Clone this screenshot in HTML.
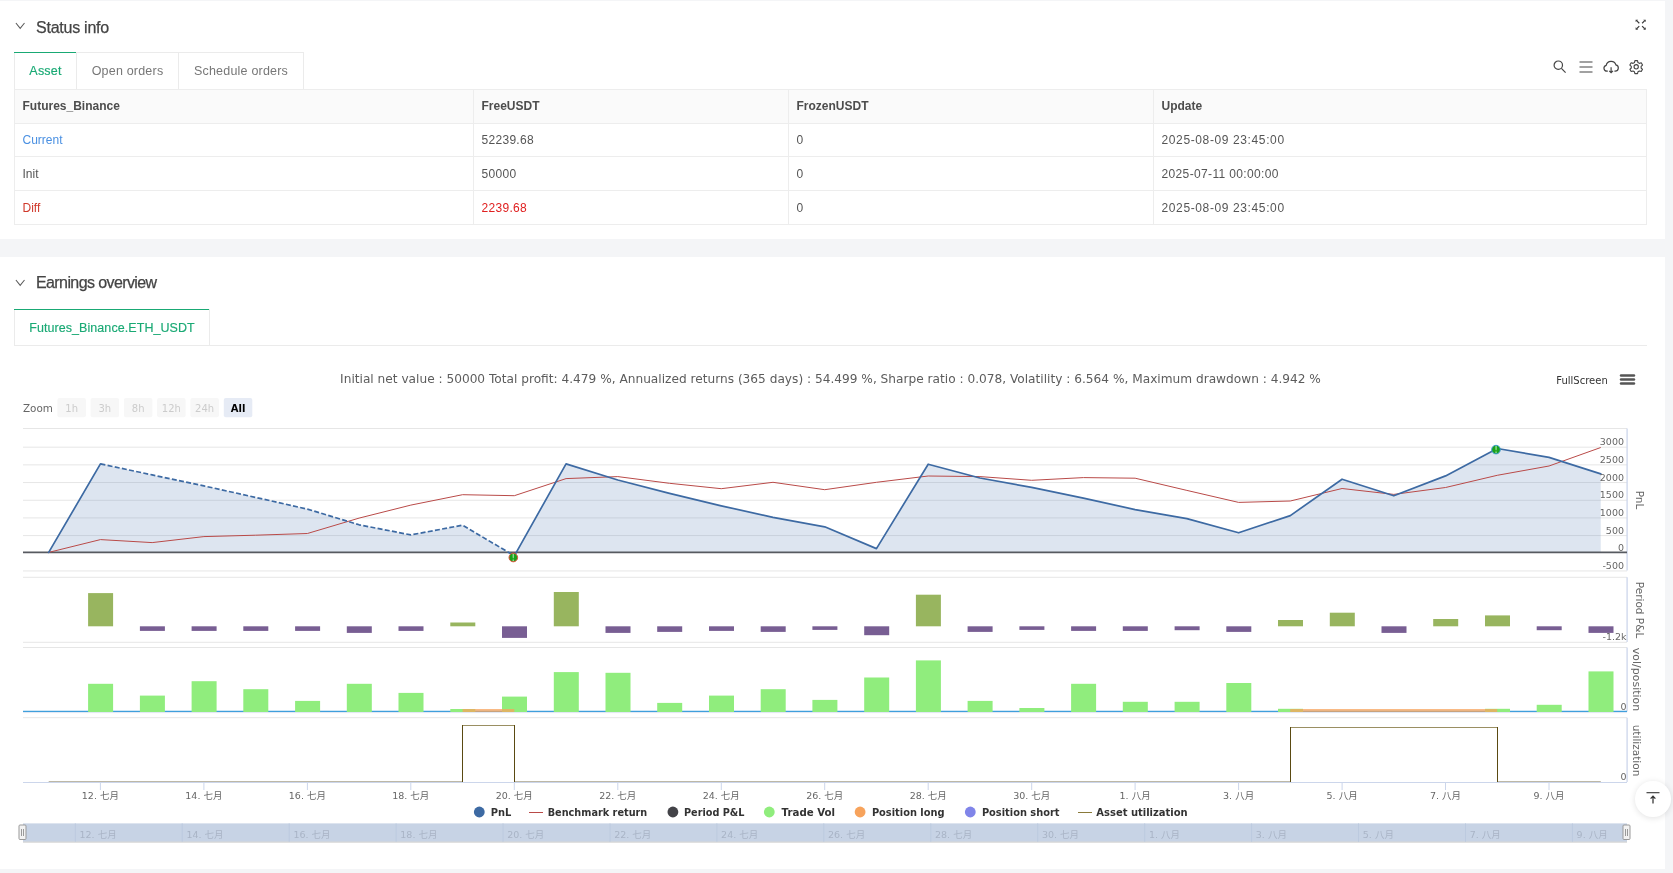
<!DOCTYPE html>
<html><head><meta charset="utf-8"><title>Backtest</title>
<style>
html,body{margin:0;padding:0;}
body{width:1673px;height:873px;overflow:hidden;background:#f4f5f7;position:relative;font-family:"Liberation Sans","Noto Sans CJK SC",sans-serif;color:#4a4a4a;}
.card{position:absolute;left:0;width:1665px;transform:translateZ(0);}
.bg{position:absolute;left:0;width:1665px;background:#fff;}
#c1{top:1px;height:238px;}
#c2{top:257px;height:612px;}
.hd{position:absolute;left:36px;font-size:16px;letter-spacing:-.24px;color:#444;white-space:nowrap;-webkit-text-stroke:0.25px #444;}
.chev{position:absolute;left:14px;}
.tabs{position:absolute;left:14px;display:flex;height:36px;border:1px solid #ebebeb;border-bottom:none;box-sizing:content-box;}
.tab{height:36px;line-height:36px;font-size:12.5px;color:#777;letter-spacing:.2px;border-right:1px solid #ebebeb;box-sizing:border-box;text-align:center;white-space:nowrap;position:relative;}
.tab:last-child{border-right:none;}
.tab.on{color:#19a974;-webkit-text-stroke:.15px #19a974;}
.tab.on:before{content:"";position:absolute;left:-1px;right:0;top:-1px;height:1px;background:#19a974;}
table{position:absolute;left:14px;top:88px;width:1633px;border-collapse:collapse;table-layout:fixed;font-size:12px;}
td,th{border:1px solid #ededed;height:34px;padding:0 0 0 7.5px;text-align:left;box-sizing:border-box;white-space:nowrap;color:#555;font-weight:normal;}
th{background:#fafafa;font-weight:bold;color:#4d4d4d;height:34px;padding-bottom:1px;}
tr.r1 td{height:33px;}
td.n{letter-spacing:.3px;} td.d{letter-spacing:.62px;}
.blue{color:#4a90e2;} .red{color:#e02020;} .red2{color:#d0392b;}
svg text{font-family:"DejaVu Sans","Noto Sans CJK SC",sans-serif;}
.ax{font-size:9.5px;fill:#666;}
.at{font-size:10.5px;fill:#666;}
.lg{font-size:10.5px;font-weight:bold;fill:#333;}
.nv{font-size:9.5px;fill:#a9b4c6;}
.tt{font-size:12.17px;fill:#5c5c5c;}
.zm{font-size:10.4px;fill:#666;}
.zb{font-size:10px;fill:#ccc;}
.zb.on{fill:#000;font-weight:bold;}
.fs{font-size:10px;fill:#333;}
#top{position:absolute;left:1635px;top:781px;width:35.5px;height:35.5px;border-radius:50%;background:#fff;box-shadow:0 1px 6px rgba(0,0,0,.12);}
</style></head><body>
<div class="bg" style="top:1px;height:238px"></div><div class="bg" style="top:257px;height:612px"></div>
<div class="card" id="c1">
 <svg class="chev" style="top:20px" width="12" height="10" viewBox="0 0 12 10"><path d="M1.9 2 L6.2 7.3 L10.5 2" fill="none" stroke="#5a5a5a" stroke-width="1.05"/></svg>
 <div class="hd" style="top:17.5px">Status info</div>
 <svg style="position:absolute;left:1633.8px;top:17.4px" width="13.4" height="13.4" viewBox="-7 -7 14 14"><g stroke="#3a3a3a" fill="#3a3a3a"><path d="M-1.5 -1.5 L-4.2 -4.2" fill="none" stroke-width="1.25"/><path d="M-5.3 -5.3 L-5.3 -2.7 L-2.7 -5.3z" stroke="none"/><path d="M-1.5 1.5 L-4.2 4.2" fill="none" stroke-width="1.25"/><path d="M-5.3 5.3 L-5.3 2.7 L-2.7 5.3z" stroke="none"/><path d="M1.5 -1.5 L4.2 -4.2" fill="none" stroke-width="1.25"/><path d="M5.3 -5.3 L5.3 -2.7 L2.7 -5.3z" stroke="none"/><path d="M1.5 1.5 L4.2 4.2" fill="none" stroke-width="1.25"/><path d="M5.3 5.3 L5.3 2.7 L2.7 5.3z" stroke="none"/></g></svg>
 <div class="tabs" style="top:51px"><div class="tab on" style="width:62px">Asset</div><div class="tab" style="width:102px">Open orders</div><div class="tab" style="width:124px">Schedule orders</div></div>
 <svg style="position:absolute;left:1550px;top:56px" width="100" height="20" viewBox="0 0 100 20"><g fill="none" stroke="#444" stroke-width="1.2">
  <circle cx="8.3" cy="8.2" r="4.2"/><path d="M11.4 11.4 L15.6 15.6"/>
  <path d="M29.5 5 H42.5 M29.5 10 H42.5 M29.5 15 H42.5"/>
  <path d="M57.8 14.2 H57 A3 3 0 0 1 56.2 8.3 A5 5 0 0 1 65.9 7.9 A3.2 3.2 0 0 1 65 14.2 H64.4 M61.1 10.3 V15.6 M59.2 13.8 L61.1 15.7 L63 13.8"/>
  <g transform="translate(86.2 9.8) scale(.93) translate(-86 -10)"><circle cx="86" cy="10" r="2.3"/>
  <path d="M84.6 3.4 h2.8 l.5 2 1.5 .9 2-.6 1.4 2.4 -1.5 1.4 v1.8 l1.5 1.4 -1.4 2.4 -2-.6 -1.5 .9 -.5 2 h-2.8 l-.5-2 -1.5-.9 -2 .6 -1.4-2.4 1.5-1.4 v-1.8 l-1.5-1.4 1.4-2.4 2 .6 1.5-.9z" stroke-linejoin="round"/></g></g></svg>
 <table><colgroup><col style="width:459px"><col style="width:315px"><col style="width:365px"><col></colgroup>
 <tr><th>Futures_Binance</th><th>FreeUSDT</th><th>FrozenUSDT</th><th>Update</th></tr>
 <tr class="r1"><td class="blue">Current</td><td class="n">52239.68</td><td>0</td><td class="d">2025-08-09 23:45:00</td></tr>
 <tr><td>Init</td><td class="n">50000</td><td>0</td><td class="d" style="letter-spacing:.36px">2025-07-11 00:00:00</td></tr>
 <tr><td class="red2">Diff</td><td class="red n">2239.68</td><td>0</td><td class="d">2025-08-09 23:45:00</td></tr>
 </table>
</div>
<div class="card" id="c2">
 <svg class="chev" style="top:21px" width="12" height="10" viewBox="0 0 12 10"><path d="M1.9 2 L6.2 7.3 L10.5 2" fill="none" stroke="#5a5a5a" stroke-width="1.05"/></svg>
 <div class="hd" style="top:17.4px;letter-spacing:-.6px">Earnings overview</div>
 <div style="position:absolute;left:14px;top:88px;width:1633px;height:1px;background:#ebebeb"></div>
 <div class="tabs" style="top:52px;height:35px"><div class="tab on" style="width:194px;height:35px;font-size:12.5px;letter-spacing:.07px;line-height:36px;-webkit-text-stroke:.15px #19a974">Futures_Binance.ETH_USDT</div></div>
</div>
<svg style="position:absolute;left:0;top:0;transform:translateZ(0)" width="1673" height="873" viewBox="0 0 1673 873">
<line x1="23" x2="1627" y1="428.5" y2="428.5" stroke="#e6e6e6" stroke-width="1"/>
<line x1="23" x2="1627" y1="447.20" y2="447.20" stroke="#e6e6e6" stroke-width="1"/>
<line x1="23" x2="1627" y1="464.88" y2="464.88" stroke="#e6e6e6" stroke-width="1"/>
<line x1="23" x2="1627" y1="482.56" y2="482.56" stroke="#e6e6e6" stroke-width="1"/>
<line x1="23" x2="1627" y1="500.24" y2="500.24" stroke="#e6e6e6" stroke-width="1"/>
<line x1="23" x2="1627" y1="517.92" y2="517.92" stroke="#e6e6e6" stroke-width="1"/>
<line x1="23" x2="1627" y1="535.60" y2="535.60" stroke="#e6e6e6" stroke-width="1"/>
<line x1="23" x2="1627" y1="570.96" y2="570.96" stroke="#e6e6e6" stroke-width="1"/>
<line x1="23" x2="1627" y1="577.3" y2="577.3" stroke="#e6e6e6" stroke-width="1"/>
<line x1="23" x2="1627" y1="642.3" y2="642.3" stroke="#e6e6e6" stroke-width="1"/>
<line x1="23" x2="1627" y1="647.5" y2="647.5" stroke="#e6e6e6" stroke-width="1"/>
<line x1="23" x2="1627" y1="717.7" y2="717.7" stroke="#e6e6e6" stroke-width="1"/>
<line x1="1627.1" x2="1627.1" y1="428.5" y2="570.6" stroke="#ccd6eb" stroke-width="1.3"/>
<line x1="1627.1" x2="1627.1" y1="577.3" y2="641.9" stroke="#ccd6eb" stroke-width="1.3"/>
<line x1="1627.1" x2="1627.1" y1="647.5" y2="711.6" stroke="#ccd6eb" stroke-width="1.3"/>
<line x1="1627.1" x2="1627.1" y1="717.7" y2="782" stroke="#ccd6eb" stroke-width="1.3"/>
<polygon points="48.70,552.40 100.44,463.90 152.17,474.90 203.90,485.90 255.64,497.40 307.38,509.10 359.11,524.80 410.84,534.90 462.58,525.20 514.32,555.80 566.05,463.90 617.79,480.00 669.52,493.40 721.25,505.80 772.99,517.40 824.73,526.80 876.46,548.60 928.20,464.20 979.93,478.00 1031.66,487.40 1083.40,498.10 1135.13,509.60 1186.87,518.60 1238.61,532.80 1290.34,515.60 1342.08,479.20 1393.81,495.80 1445.55,475.90 1497.28,448.50 1549.02,457.40 1600.75,473.90 1600.75,552.6 48.70,552.6" fill="rgba(67,110,170,0.18)"/>
<line x1="23" x2="1627" y1="552.4" y2="552.4" stroke="#575a60" stroke-width="1.8"/>
<polyline points="48.70,552.40 100.44,539.60 152.17,542.60 203.90,536.60 255.64,535.20 307.38,533.50 359.11,518.10 410.84,505.10 462.58,494.70 514.32,495.70 566.05,478.60 617.79,476.60 669.52,483.30 721.25,488.70 772.99,482.30 824.73,489.70 876.46,482.30 928.20,476.00 979.93,476.60 1031.66,480.30 1083.40,477.60 1135.13,478.20 1186.87,490.40 1238.61,502.40 1290.34,501.00 1342.08,488.50 1393.81,494.40 1445.55,487.50 1497.28,475.30 1549.02,466.00 1600.75,447.50" fill="none" stroke="#b94a48" stroke-width="1" stroke-linejoin="round"/>
<polyline points="48.70,552.40 100.44,463.90" fill="none" stroke="#3d6aa3" stroke-width="1.7" stroke-linejoin="round" stroke-linecap="round"/>
<polyline points="100.44,463.90 152.17,474.90 203.90,485.90 255.64,497.40 307.38,509.10 359.11,524.80 410.84,534.90 462.58,525.20 514.32,555.80" fill="none" stroke="#3d6aa3" stroke-width="1.7" stroke-dasharray="5,2.3" stroke-linejoin="round"/>
<polyline points="514.32,555.80 566.05,463.90 617.79,480.00 669.52,493.40 721.25,505.80 772.99,517.40 824.73,526.80 876.46,548.60 928.20,464.20 979.93,478.00 1031.66,487.40 1083.40,498.10 1135.13,509.60 1186.87,518.60 1238.61,532.80 1290.34,515.60 1342.08,479.20 1393.81,495.80 1445.55,475.90 1497.28,448.50 1549.02,457.40 1600.75,473.90" fill="none" stroke="#3d6aa3" stroke-width="1.7" stroke-linejoin="round" stroke-linecap="round"/>
<circle cx="513.3" cy="557.5" r="4.3" fill="#1aa21a" stroke="#e0523c" stroke-width="1"/>
<text x="513.3" y="560.5" font-size="8" font-weight="bold" fill="#8fd98f" text-anchor="middle">!</text>
<circle cx="1496.0" cy="449.6" r="4.3" fill="#1aa21a" stroke="#3d9bd0" stroke-width="1"/>
<text x="1496.0" y="452.6" font-size="8" font-weight="bold" fill="#8fd98f" text-anchor="middle">!</text>
<rect x="88.1" y="593.1" width="25.0" height="33.2" fill="#98b55f"/>
<rect x="139.9" y="626.3" width="25.0" height="4.6" fill="#785e93"/>
<rect x="191.6" y="626.3" width="25.0" height="4.6" fill="#785e93"/>
<rect x="243.3" y="626.3" width="25.0" height="4.6" fill="#785e93"/>
<rect x="295.1" y="626.3" width="25.0" height="4.6" fill="#785e93"/>
<rect x="346.8" y="626.3" width="25.0" height="6.6" fill="#785e93"/>
<rect x="398.5" y="626.3" width="25.0" height="4.6" fill="#785e93"/>
<rect x="450.3" y="622.5" width="25.0" height="3.8" fill="#98b55f"/>
<rect x="502.0" y="626.3" width="25.0" height="11.6" fill="#785e93"/>
<rect x="553.8" y="592.0" width="25.0" height="34.3" fill="#98b55f"/>
<rect x="605.5" y="626.3" width="25.0" height="6.6" fill="#785e93"/>
<rect x="657.2" y="626.3" width="25.0" height="5.6" fill="#785e93"/>
<rect x="709.0" y="626.3" width="25.0" height="4.6" fill="#785e93"/>
<rect x="760.7" y="626.3" width="25.0" height="5.6" fill="#785e93"/>
<rect x="812.4" y="626.3" width="25.0" height="3.6" fill="#785e93"/>
<rect x="864.2" y="626.3" width="25.0" height="8.9" fill="#785e93"/>
<rect x="915.9" y="594.7" width="25.0" height="31.6" fill="#98b55f"/>
<rect x="967.6" y="626.3" width="25.0" height="5.6" fill="#785e93"/>
<rect x="1019.4" y="626.3" width="25.0" height="3.6" fill="#785e93"/>
<rect x="1071.1" y="626.3" width="25.0" height="4.6" fill="#785e93"/>
<rect x="1122.8" y="626.3" width="25.0" height="4.6" fill="#785e93"/>
<rect x="1174.6" y="626.3" width="25.0" height="3.9" fill="#785e93"/>
<rect x="1226.3" y="626.3" width="25.0" height="5.6" fill="#785e93"/>
<rect x="1278.0" y="620.0" width="25.0" height="6.3" fill="#98b55f"/>
<rect x="1329.8" y="612.7" width="25.0" height="13.6" fill="#98b55f"/>
<rect x="1381.5" y="626.3" width="25.0" height="6.6" fill="#785e93"/>
<rect x="1433.2" y="619.0" width="25.0" height="7.3" fill="#98b55f"/>
<rect x="1485.0" y="615.4" width="25.0" height="10.9" fill="#98b55f"/>
<rect x="1536.7" y="626.3" width="25.0" height="3.9" fill="#785e93"/>
<rect x="1588.5" y="626.3" width="25.0" height="6.6" fill="#785e93"/>
<line x1="23" x2="1627" y1="712.6" y2="712.6" stroke="#dfe6f3" stroke-width="1"/>
<line x1="23" x2="1627" y1="711.4" y2="711.4" stroke="#3f9fdc" stroke-width="1.2"/>
<rect x="88.1" y="683.8" width="25.0" height="28.2" fill="#90ed7d"/>
<rect x="139.9" y="695.6" width="25.0" height="16.4" fill="#90ed7d"/>
<rect x="191.6" y="681.2" width="25.0" height="30.8" fill="#90ed7d"/>
<rect x="243.3" y="689.2" width="25.0" height="22.8" fill="#90ed7d"/>
<rect x="295.1" y="700.9" width="25.0" height="11.1" fill="#90ed7d"/>
<rect x="346.8" y="683.8" width="25.0" height="28.2" fill="#90ed7d"/>
<rect x="398.5" y="692.9" width="25.0" height="19.1" fill="#90ed7d"/>
<rect x="450.3" y="709.0" width="25.0" height="3.0" fill="#90ed7d"/>
<rect x="502.0" y="696.6" width="25.0" height="15.4" fill="#90ed7d"/>
<rect x="553.8" y="672.1" width="25.0" height="39.9" fill="#90ed7d"/>
<rect x="605.5" y="672.8" width="25.0" height="39.2" fill="#90ed7d"/>
<rect x="657.2" y="702.9" width="25.0" height="9.1" fill="#90ed7d"/>
<rect x="709.0" y="695.6" width="25.0" height="16.4" fill="#90ed7d"/>
<rect x="760.7" y="689.2" width="25.0" height="22.8" fill="#90ed7d"/>
<rect x="812.4" y="699.9" width="25.0" height="12.1" fill="#90ed7d"/>
<rect x="864.2" y="677.5" width="25.0" height="34.5" fill="#90ed7d"/>
<rect x="915.9" y="660.4" width="25.0" height="51.6" fill="#90ed7d"/>
<rect x="967.6" y="700.9" width="25.0" height="11.1" fill="#90ed7d"/>
<rect x="1019.4" y="708.0" width="25.0" height="4.0" fill="#90ed7d"/>
<rect x="1071.1" y="683.8" width="25.0" height="28.2" fill="#90ed7d"/>
<rect x="1122.8" y="701.8" width="25.0" height="10.2" fill="#90ed7d"/>
<rect x="1174.6" y="701.8" width="25.0" height="10.2" fill="#90ed7d"/>
<rect x="1226.3" y="683.0" width="25.0" height="29.0" fill="#90ed7d"/>
<rect x="1278.0" y="708.8" width="25.0" height="3.2" fill="#90ed7d"/>
<rect x="1485.0" y="708.8" width="25.0" height="3.2" fill="#90ed7d"/>
<rect x="1536.7" y="704.8" width="25.0" height="7.2" fill="#90ed7d"/>
<rect x="1588.5" y="671.4" width="25.0" height="40.6" fill="#90ed7d"/>
<rect x="462.6" y="709" width="51.7" height="3" fill="#f7a35c" opacity="0.75"/>
<rect x="1290.3" y="709" width="206.9" height="3" fill="#f7a35c" opacity="0.75"/>
<line x1="48.7" x2="462.5" y1="781.5" y2="781.5" stroke="#bdb8a6" stroke-width="1"/>
<line x1="514.5" x2="1290.5" y1="781.5" y2="781.5" stroke="#bdb8a6" stroke-width="1"/>
<line x1="1497.5" x2="1600.8" y1="781.5" y2="781.5" stroke="#bdb8a6" stroke-width="1"/>
<line x1="462.5" x2="514.5" y1="725.5" y2="725.5" stroke="#9a8f62" stroke-width="1"/>
<line x1="462.5" x2="462.5" y1="725.0" y2="782" stroke="#5a4a12" stroke-width="1"/>
<line x1="514.5" x2="514.5" y1="725.0" y2="782" stroke="#5a4a12" stroke-width="1"/>
<line x1="1290.5" x2="1497.5" y1="727.5" y2="727.5" stroke="#9a8f62" stroke-width="1"/>
<line x1="1290.5" x2="1290.5" y1="727.0" y2="782" stroke="#5a4a12" stroke-width="1"/>
<line x1="1497.5" x2="1497.5" y1="727.0" y2="782" stroke="#5a4a12" stroke-width="1"/>
<line x1="23" x2="1627" y1="782.5" y2="782.5" stroke="#ccd6eb" stroke-width="1"/>
<line x1="100.4" x2="100.4" y1="782.5" y2="790" stroke="#ccd6eb" stroke-width="1"/>
<text x="100.4" y="798.8" class="ax" text-anchor="middle">12. 七月</text>
<line x1="203.9" x2="203.9" y1="782.5" y2="790" stroke="#ccd6eb" stroke-width="1"/>
<text x="203.9" y="798.8" class="ax" text-anchor="middle">14. 七月</text>
<line x1="307.4" x2="307.4" y1="782.5" y2="790" stroke="#ccd6eb" stroke-width="1"/>
<text x="307.4" y="798.8" class="ax" text-anchor="middle">16. 七月</text>
<line x1="410.8" x2="410.8" y1="782.5" y2="790" stroke="#ccd6eb" stroke-width="1"/>
<text x="410.8" y="798.8" class="ax" text-anchor="middle">18. 七月</text>
<line x1="514.3" x2="514.3" y1="782.5" y2="790" stroke="#ccd6eb" stroke-width="1"/>
<text x="514.3" y="798.8" class="ax" text-anchor="middle">20. 七月</text>
<line x1="617.8" x2="617.8" y1="782.5" y2="790" stroke="#ccd6eb" stroke-width="1"/>
<text x="617.8" y="798.8" class="ax" text-anchor="middle">22. 七月</text>
<line x1="721.3" x2="721.3" y1="782.5" y2="790" stroke="#ccd6eb" stroke-width="1"/>
<text x="721.3" y="798.8" class="ax" text-anchor="middle">24. 七月</text>
<line x1="824.7" x2="824.7" y1="782.5" y2="790" stroke="#ccd6eb" stroke-width="1"/>
<text x="824.7" y="798.8" class="ax" text-anchor="middle">26. 七月</text>
<line x1="928.2" x2="928.2" y1="782.5" y2="790" stroke="#ccd6eb" stroke-width="1"/>
<text x="928.2" y="798.8" class="ax" text-anchor="middle">28. 七月</text>
<line x1="1031.7" x2="1031.7" y1="782.5" y2="790" stroke="#ccd6eb" stroke-width="1"/>
<text x="1031.7" y="798.8" class="ax" text-anchor="middle">30. 七月</text>
<line x1="1135.1" x2="1135.1" y1="782.5" y2="790" stroke="#ccd6eb" stroke-width="1"/>
<text x="1135.1" y="798.8" class="ax" text-anchor="middle">1. 八月</text>
<line x1="1238.6" x2="1238.6" y1="782.5" y2="790" stroke="#ccd6eb" stroke-width="1"/>
<text x="1238.6" y="798.8" class="ax" text-anchor="middle">3. 八月</text>
<line x1="1342.1" x2="1342.1" y1="782.5" y2="790" stroke="#ccd6eb" stroke-width="1"/>
<text x="1342.1" y="798.8" class="ax" text-anchor="middle">5. 八月</text>
<line x1="1445.5" x2="1445.5" y1="782.5" y2="790" stroke="#ccd6eb" stroke-width="1"/>
<text x="1445.5" y="798.8" class="ax" text-anchor="middle">7. 八月</text>
<line x1="1549.0" x2="1549.0" y1="782.5" y2="790" stroke="#ccd6eb" stroke-width="1"/>
<text x="1549.0" y="798.8" class="ax" text-anchor="middle">9. 八月</text>
<text x="1624" y="445.2" class="ax" text-anchor="end">3000</text>
<text x="1624" y="463.0" class="ax" text-anchor="end">2500</text>
<text x="1624" y="480.7" class="ax" text-anchor="end">2000</text>
<text x="1624" y="498.4" class="ax" text-anchor="end">1500</text>
<text x="1624" y="516.1" class="ax" text-anchor="end">1000</text>
<text x="1624" y="533.9" class="ax" text-anchor="end">500</text>
<text x="1624" y="550.7" class="ax" text-anchor="end">0</text>
<text x="1624" y="569.3" class="ax" text-anchor="end">-500</text>
<text x="1626.5" y="639.5" class="ax" text-anchor="end">-1.2k</text>
<text x="1626.5" y="709.7" class="ax" text-anchor="end">0</text>
<text x="1626.5" y="779.8" class="ax" text-anchor="end">0</text>
<text transform="translate(1635.5,500) rotate(90)" class="at" text-anchor="middle">PnL</text>
<text transform="translate(1635.5,610) rotate(90)" class="at" text-anchor="middle">Period P&amp;L</text>
<text transform="translate(1632.5,679.5) rotate(90)" class="at" text-anchor="middle" textLength="63.4" lengthAdjust="spacingAndGlyphs">vol/position</text>
<text transform="translate(1632.5,750.5) rotate(90)" class="at" text-anchor="middle">utilization</text>
<circle cx="479.3" cy="812" r="5.4" fill="#3d6aa3"/>
<text x="490.7" y="815.7" class="lg" textLength="20.6" lengthAdjust="spacingAndGlyphs">PnL</text>
<line x1="529" x2="543" y1="812.5" y2="812.5" stroke="#b94a48" stroke-width="1"/>
<text x="547.7" y="815.7" class="lg" textLength="99.6" lengthAdjust="spacingAndGlyphs">Benchmark return</text>
<circle cx="672.9" cy="812" r="5.4" fill="#434348"/>
<text x="684" y="815.7" class="lg" textLength="60.5" lengthAdjust="spacingAndGlyphs">Period P&amp;L</text>
<circle cx="769.3" cy="812" r="5.4" fill="#90ed7d"/>
<text x="781.6" y="815.7" class="lg" textLength="53.5" lengthAdjust="spacingAndGlyphs">Trade Vol</text>
<circle cx="860.1" cy="812" r="5.4" fill="#f7a35c"/>
<text x="871.9" y="815.7" class="lg" textLength="72.6" lengthAdjust="spacingAndGlyphs">Position long</text>
<circle cx="970.3" cy="812" r="5.4" fill="#8085e9"/>
<text x="981.9" y="815.7" class="lg" textLength="77.6" lengthAdjust="spacingAndGlyphs">Position short</text>
<line x1="1078" x2="1092" y1="812.5" y2="812.5" stroke="#8a7a3a" stroke-width="1"/>
<text x="1096.3" y="815.7" class="lg" textLength="91.4" lengthAdjust="spacingAndGlyphs">Asset utilization</text>
<rect x="23" y="823.4" width="1604" height="18.4" fill="#c7d3e5"/>
<line x1="23" x2="1627" y1="842.1" y2="842.1" stroke="#ccc" stroke-width="1"/>
<line x1="75.3" x2="75.3" y1="823.4" y2="841.8" stroke="#bccadf" stroke-width="1"/>
<text x="79.5" y="838" class="nv">12. 七月</text>
<line x1="182.2" x2="182.2" y1="823.4" y2="841.8" stroke="#bccadf" stroke-width="1"/>
<text x="186.4" y="838" class="nv">14. 七月</text>
<line x1="289.2" x2="289.2" y1="823.4" y2="841.8" stroke="#bccadf" stroke-width="1"/>
<text x="293.4" y="838" class="nv">16. 七月</text>
<line x1="396.1" x2="396.1" y1="823.4" y2="841.8" stroke="#bccadf" stroke-width="1"/>
<text x="400.3" y="838" class="nv">18. 七月</text>
<line x1="503.0" x2="503.0" y1="823.4" y2="841.8" stroke="#bccadf" stroke-width="1"/>
<text x="507.2" y="838" class="nv">20. 七月</text>
<line x1="610.0" x2="610.0" y1="823.4" y2="841.8" stroke="#bccadf" stroke-width="1"/>
<text x="614.2" y="838" class="nv">22. 七月</text>
<line x1="716.9" x2="716.9" y1="823.4" y2="841.8" stroke="#bccadf" stroke-width="1"/>
<text x="721.1" y="838" class="nv">24. 七月</text>
<line x1="823.8" x2="823.8" y1="823.4" y2="841.8" stroke="#bccadf" stroke-width="1"/>
<text x="828.0" y="838" class="nv">26. 七月</text>
<line x1="930.8" x2="930.8" y1="823.4" y2="841.8" stroke="#bccadf" stroke-width="1"/>
<text x="935.0" y="838" class="nv">28. 七月</text>
<line x1="1037.7" x2="1037.7" y1="823.4" y2="841.8" stroke="#bccadf" stroke-width="1"/>
<text x="1041.9" y="838" class="nv">30. 七月</text>
<line x1="1144.7" x2="1144.7" y1="823.4" y2="841.8" stroke="#bccadf" stroke-width="1"/>
<text x="1148.9" y="838" class="nv">1. 八月</text>
<line x1="1251.6" x2="1251.6" y1="823.4" y2="841.8" stroke="#bccadf" stroke-width="1"/>
<text x="1255.8" y="838" class="nv">3. 八月</text>
<line x1="1358.5" x2="1358.5" y1="823.4" y2="841.8" stroke="#bccadf" stroke-width="1"/>
<text x="1362.8" y="838" class="nv">5. 八月</text>
<line x1="1465.5" x2="1465.5" y1="823.4" y2="841.8" stroke="#bccadf" stroke-width="1"/>
<text x="1469.7" y="838" class="nv">7. 八月</text>
<line x1="1572.4" x2="1572.4" y1="823.4" y2="841.8" stroke="#bccadf" stroke-width="1"/>
<text x="1576.6" y="838" class="nv">9. 八月</text>
<rect x="19.0" y="825" width="7" height="14.5" fill="#f2f2f2" stroke="#999" stroke-width="1" rx="1"/>
<line x1="21.5" x2="21.5" y1="829" y2="836" stroke="#999"/><line x1="23.5" x2="23.5" y1="829" y2="836" stroke="#999"/>
<rect x="1623.0" y="825" width="7" height="14.5" fill="#f2f2f2" stroke="#999" stroke-width="1" rx="1"/>
<line x1="1625.5" x2="1625.5" y1="829" y2="836" stroke="#999"/><line x1="1627.5" x2="1627.5" y1="829" y2="836" stroke="#999"/>
<text x="830.5" y="383" class="tt" text-anchor="middle">Initial net value : 50000 Total profit: 4.479 %, Annualized returns (365 days) : 54.499 %, Sharpe ratio : 0.078, Volatility : 6.564 %, Maximum drawdown : 4.942 %</text>
<text x="23" y="412" class="zm">Zoom</text>
<rect x="57.4" y="398" width="28.5" height="19.3" rx="2" fill="#f7f7f7"/>
<text x="71.65" y="412" class="zb" text-anchor="middle">1h</text>
<rect x="90.6" y="398" width="28.5" height="19.3" rx="2" fill="#f7f7f7"/>
<text x="104.85" y="412" class="zb" text-anchor="middle">3h</text>
<rect x="123.9" y="398" width="28.5" height="19.3" rx="2" fill="#f7f7f7"/>
<text x="138.15" y="412" class="zb" text-anchor="middle">8h</text>
<rect x="157.1" y="398" width="28.5" height="19.3" rx="2" fill="#f7f7f7"/>
<text x="171.35" y="412" class="zb" text-anchor="middle">12h</text>
<rect x="190.4" y="398" width="28.5" height="19.3" rx="2" fill="#f7f7f7"/>
<text x="204.65" y="412" class="zb" text-anchor="middle">24h</text>
<rect x="223.8" y="398" width="28.5" height="19.3" rx="2" fill="#e6ebf5"/>
<text x="238.05" y="412" class="zb on" text-anchor="middle">All</text>
<text x="1582" y="384" class="fs" text-anchor="middle">FullScreen</text>
<line x1="1621" x2="1634" y1="375.5" y2="375.5" stroke="#555" stroke-width="2.4" stroke-linecap="round"/>
<line x1="1621" x2="1634" y1="379.5" y2="379.5" stroke="#555" stroke-width="2.4" stroke-linecap="round"/>
<line x1="1621" x2="1634" y1="383.5" y2="383.5" stroke="#555" stroke-width="2.4" stroke-linecap="round"/>
</svg>
<div id="top"><svg width="36" height="36" viewBox="0 0 36 36" style="position:absolute;left:0;top:0"><g stroke="#333" fill="none"><path d="M11.5 11.7 H24.5" stroke-width="1.1"/><path d="M18 22.6 V15.4 M15.6 17.6 L18 15.2 L20.4 17.6" stroke-width="1.25"/></g></svg></div>
</body></html>
